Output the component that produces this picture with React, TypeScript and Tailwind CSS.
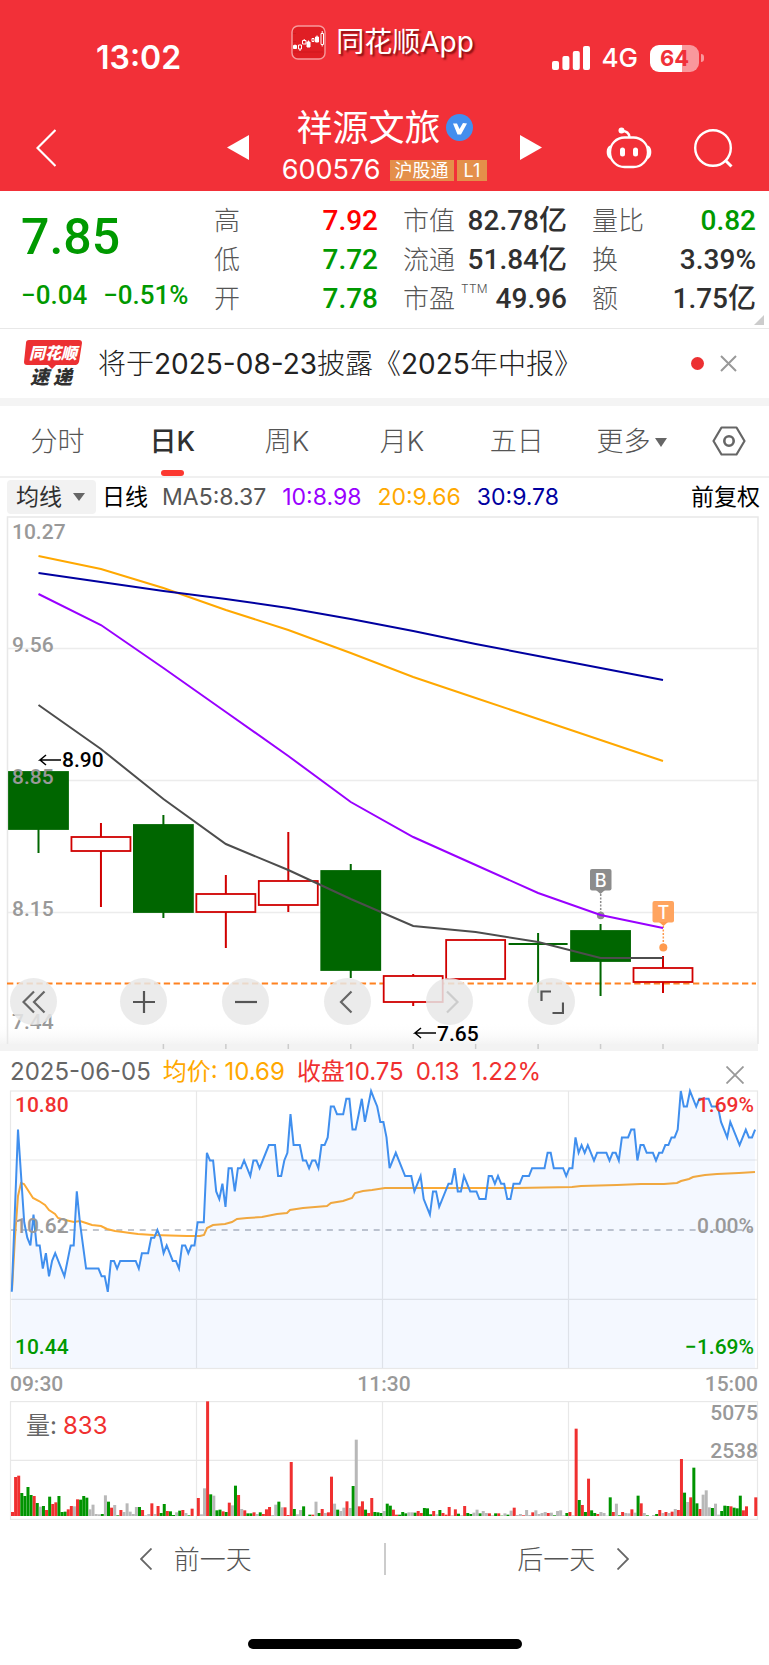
import { useState } from 'react'

interface Candle {
  open: number
  close: number
  high: number
  low: number
  up: boolean
}

interface Metric {
  label: string
  value: string
  tone?: string
  note?: string
}

const metrics: Metric[][] = [
  [
    { label: '高', value: '7.92', tone: 'text-[#ff0000]' },
    { label: '低', value: '7.72', tone: 'text-[#009900]' },
    { label: '开', value: '7.78', tone: 'text-[#009900]' },
  ],
  [
    { label: '市值', value: '82.78亿' },
    { label: '流通', value: '51.84亿' },
    { label: '市盈', value: '49.96', note: 'TTM' },
  ],
  [
    { label: '量比', value: '0.82', tone: 'text-[#009900]' },
    { label: '换', value: '3.39%' },
    { label: '额', value: '1.75亿' },
  ],
]

const tabs = ['分时', '日K', '周K', '月K', '五日', '更多']

// Chart units: open/close/high/low are y positions inside the plot
const candles: Candle[] = [
  { open: 256, close: 313, high: 256, low: 337, up: false },
  { open: 335, close: 321, high: 307, low: 391, up: true },
  { open: 309, close: 396, high: 299, low: 402, up: false },
  { open: 396, close: 378, high: 359, low: 432, up: true },
  { open: 389, close: 365, high: 316, low: 396, up: true },
  { open: 355, close: 454, high: 348, low: 462, up: false },
  { open: 486, close: 460, high: 458, low: 490, up: true },
  { open: 463, close: 424, high: 423, low: 463, up: true },
  { open: 427, close: 429, high: 417, low: 477, up: false },
  { open: 415, close: 445, high: 408, low: 480, up: false },
  { open: 466, close: 452, high: 440, low: 477, up: true },
]

const averages = [
  { color: '#ffa800', ys: [40, 53, 72, 94, 114, 137, 161, 182, 203, 224, 245] },
  { color: '#0000a0', ys: [57, 66, 75, 83, 92, 103, 115, 128, 140, 152, 164] },
  { color: '#9900ff', ys: [78, 109, 152, 196, 240, 286, 321, 349, 377, 399, 412] },
  { color: '#4d4d4d', ys: [189, 233, 283, 328, 354, 383, 410, 416, 426, 442, 442] },
]

const candleX = (i: number) => 38.5 + i * 62.45

// minute:cents away from the previous close of 10.62
const priceData =
  '0:-8 2:13 4:1 5:-1 6:-2 7:2 8:-2 9:-2 10:-5 11:-3 12:-6 13:-4 14:-3 17:-6 19:-2 20:-2 21:5 22:1 24:-5 28:-5 ' +
  '29:-6 30:-6 31:-8 32:-4 33:-4 34:-5 35:-4 40:-4 41:-5 42:-3 44:-3 45:-1 46:-1 47:0 48:-1 49:-3 50:-2 52:-4 ' +
  '53:-4 54:-5 55:-2 56:-2 57:-3 58:-2 59:-2 60:1 62:1 63:10 64:9 65:9 66:5 67:4 68:6 69:3 70:8 71:8 72:5 73:8 ' +
  '74:8 75:9 77:7 78:9 79:9 80:8 83:11 85:11 86:7 87:7 88:9 89:10 90:15 91:11 93:11 94:9 95:9 96:8 97:9 98:9 ' +
  '99:8 100:11 101:11 102:12 103:16 104:16 105:15 107:15 108:17 109:17 110:13 111:13 112:15 113:17 114:14 ' +
  '116:18 117:17 118:16 119:14 120:14 121:12 122:8 124:10 127:7 129:7 130:5 132:7 133:4 135:2 136:5 137:5 ' +
  '138:3 141:6 142:6 143:8 144:5 145:5 146:7 148:5 150:5 151:4 153:4 154:7 155:7 156:6 157:7 158:6 159:6 ' +
  '160:4 161:4 162:6 164:6 165:7 167:7 168:8 172:8 173:10 174:10 175:8 178:8 179:7 180:8 181:8 182:12 183:10 ' +
  '184:11 185:10 186:11 188:9 189:10 192:10 193:9 194:10 195:10 196:9 197:12 199:12 200:13 201:13 202:9 ' +
  '203:11 204:11 205:10 207:10 208:9 209:10 210:10 211:11 212:11 213:12 214:12 215:13 216:18 217:16 218:16 ' +
  '219:18 221:16 222:17 225:17 226:16 228:16 229:14 230:13 231:12 232:14 235:11 237:13 238:12 239:12 240:13'

const pricePoints = priceData
  .split(' ')
  .map((item) => {
    const [minute, cents] = item.split(':').map(Number)
    return `${(11.8 + minute * 3.097).toFixed(1)},${(140 - cents * 7.72).toFixed(1)}`
  })
  .join(' ')

const averagePoints =
  '12,200 15,147 18,106 21,93 24,94 33,108 39,111 45,115 49,120 55,124 58,128 65,130 74,132 80,131 86,133 92,135 ' +
  '101,136 107,139 115,141 123,142 130,143 138,144 153,145 187,146 200,146 204,145 207,138 213,135 225,134 ' +
  '232,132 237,129 247,128 262,127 277,124 287,123 290,120 303,118 315,117 327,116 331,113 343,111 352,108 ' +
  '355,103 363,101 372,100 385,98 404,98 517,98 572,97 581,96 617,95 641,94 664,94 677,93 681,91 689,89 693,87 ' +
  '705,85 717,84 739,83 755,82'

// One bar per minute: r = up, g = down, w = flat, then its height (344 = 5075 lots)
const volumeData =
  'r12 r117 r121 g69 g60 g87 g63 r60 g39 w28 g30 r18 g58 r36 r41 g60 g12 g13 r20 r30 w29 r50 g49 g60 g55 w20 w34 ' +
  'w6 w5 g6 w62 g43 r25 w33 g2 r18 w12 w38 w13 w6 w27 g27 r18 w2 w6 r38 w6 r30 g9 g36 r15 g14 g3 w11 g16 r18 w9 ' +
  'g2 r22 w0 r54 w5 w83 r344 g65 w61 g17 g19 r14 g12 r40 w32 g91 r63 w21 r17 g8 g8 r11 w6 g11 r6 r20 r27 w3 w34 ' +
  'g43 w26 r26 r3 r162 g21 w5 w18 g29 w0 g4 r4 w43 g9 r21 w9 r11 r118 w37 g19 w15 w25 r44 w24 g90 w229 r29 r44 ' +
  'g19 r9 r54 g12 g11 g9 w15 g37 g31 r19 r4 g4 g12 g8 w11 w11 g10 r15 r9 g24 g23 g5 r15 w5 g18 r9 r4 r27 w2 r20 ' +
  'g7 w2 r30 g9 g6 w10 w19 g8 w15 w9 r8 w2 g8 r8 g1 w8 g4 w16 r25 w3 w6 r2 w18 w3 r11 w17 w6 w9 w12 r9 w10 g2 ' +
  'w15 w17 w2 g9 r12 w2 r262 g48 r33 g12 r112 g17 g9 r6 w12 w9 w1 g56 r12 w37 g2 r12 w9 w8 r20 w10 g61 r38 w9 ' +
  'g2 w0 w3 g6 r18 w9 r12 w9 r13 w21 r18 r171 g70 w42 r56 g145 g38 r21 w64 w77 w26 g24 w37 w4 g15 g31 g30 r29 ' +
  'g25 g23 g61 r17 r29 w0 w0 r56'

const volumes = volumeData.split(' ').map((item) => ({
  kind: item[0],
  height: Number(item.slice(1)) / 3,
}))

const volumeColors: Record<string, string> = { r: '#f03030', g: '#009400', w: '#b8b8b8' }

const digits = "font-['Roboto','Noto_Sans_CJK_SC',sans-serif] font-medium"

function StatusBar() {
  return (
    <div className="grid h-[84px] grid-cols-[1fr_auto_1fr] items-center">
      <div className="pt-8 pl-24 text-[32px] font-semibold">13:02</div>
      <div className="flex items-center gap-2.5 pr-1">
        <svg className="size-[35px]" viewBox="0 0 35 35" fill="none" stroke="#fff">
          <rect x="1" y="1" width="33" height="33" rx="6" fill="#e01e24" stroke="#f79a9c" strokeWidth="1.4" />
          <path d="M2 8.500h3M2 16.500h3M2 27h30" stroke="#c9181e" strokeWidth=".7" />
          <path d="M2.500 20.500h3v3h-3zM16 17h3v5h-3zM24.500 12h3v5h-3z" fill="#fff" />
          <path d="M7.500 20h3v4h-3zM9 24v2M11.500 15.500h3.500v3.500h-3.500zM13.200 14v1.500M21 13.500h2v3h-2zM30 8.500h2.500v11h-2.500zM31.200 6v2.500M31.200 19.500v2" />
          <path d="M17.500 15.500v1.500M26 10.500v1.500M4 19.500v1" />
        </svg>
        <span className="text-[28px] leading-none [text-shadow:2px_2px_2px_rgba(90,0,0,0.75)]">同花顺App</span>
      </div>
      <div className="flex items-center justify-end gap-3 pt-8 pr-[65px]">
        <svg className="h-6 w-[38px]" viewBox="0 0 38 24" fill="#fff">
          <rect x="0" y="15" width="7" height="9" rx="2" />
          <rect x="10.400" y="10" width="7" height="14" rx="2" />
          <rect x="20.800" y="5" width="7" height="19" rx="2" />
          <rect x="31" y="0" width="7" height="24" rx="2" />
        </svg>
        <span className="text-[26px] leading-none font-medium">4G</span>
        <div className="flex items-center gap-0.5">
          <div className="flex h-[27px] w-[49px] items-center justify-center rounded-[9px] bg-[linear-gradient(90deg,#fff_65%,#f9989c_65%)] text-[22px] leading-none font-bold text-[#f03038]">
            64
          </div>
          <div className="h-2 w-[3px] rounded-r-full bg-[#f9989c]" />
        </div>
      </div>
    </div>
  )
}

function TitleBar() {
  return (
    <div className="grid h-[107px] grid-cols-[1fr_auto_1fr] items-center pt-5">
      <div className="pl-8">
        <button aria-label="返回" className="block p-1">
          <svg className="h-[38px] w-5" viewBox="0 0 20 38" fill="none" stroke="#fff" strokeWidth="2.2">
            <path d="M19.500 1 1.500 19l18 18" />
          </svg>
        </button>
      </div>
      <div className="flex items-center gap-[33px]">
        <button aria-label="上一只">
          <svg className="block h-[25px] w-[22px]" viewBox="0 0 22 25" fill="#fff">
            <path d="M0 12.500 22 0v25z" />
          </svg>
        </button>
        <div className="flex flex-col items-center">
          <h1 className="flex h-[46px] items-center gap-[5px] text-[36px] font-normal">
            祥源文旅
            <svg className="size-[27px]" viewBox="0 0 27 27">
              <circle cx="13.500" cy="13.500" r="13.500" fill="#438eee" />
              <path d="M7 9.500h4l2.500 5.500 3.500-6 4 0.500-6 11h-3.500z" fill="#fff" />
            </svg>
          </h1>
          <div className="flex h-10 items-center gap-[3px]">
            <span className="mr-1.5 text-[27px]">600576</span>
            <span className="flex h-[21px] items-center bg-[#e48f4a] px-[5px] text-[18px]">沪股通</span>
            <span className="flex h-[21px] items-center bg-[#e48f4a] px-[7px] text-[18px]">L1</span>
          </div>
        </div>
        <button aria-label="下一只">
          <svg className="block h-[25px] w-[22px]" viewBox="0 0 22 25" fill="#fff">
            <path d="M0 0v25l22-12.500z" />
          </svg>
        </button>
      </div>
      <div className="flex items-center justify-end gap-[41px] pr-9">
        <button aria-label="智能助手">
          <svg className="block h-[42px] w-[46px]" viewBox="0 0 46 42" fill="none" stroke="#fff" strokeWidth="2.400">
            <rect x="4" y="10.500" width="38" height="29.500" rx="14.500" />
            <path d="M4.500 19.500C1 21 1 29 4.500 31M41.500 19.500C45 21 45 29 41.500 31" />
            <path d="M16 4c5 0 7 2 7.500 6" />
            <circle cx="15.500" cy="3.500" r="3" fill="#fff" stroke="none" />
            <rect x="14" y="20.500" width="5" height="9" rx="2.500" fill="#fff" stroke="none" />
            <rect x="27" y="20.500" width="5" height="9" rx="2.500" fill="#fff" stroke="none" />
          </svg>
        </button>
        <button aria-label="搜索">
          <svg className="block size-[40px]" viewBox="0 0 40 40" fill="none" stroke="#fff" strokeWidth="2.400">
            <circle cx="20" cy="20" r="17.800" />
            <path d="m32 32 6.500 6.500" strokeWidth="3" />
          </svg>
        </button>
      </div>
    </div>
  )
}

function Quote() {
  return (
    <section className="relative grid h-[138px] grid-cols-[minmax(0,1fr)_164px_164px_164px] gap-x-[25px] border-b border-[#e8e8e8] pt-2.5 pr-[13px] pl-[21px]">
      <div className={`whitespace-nowrap text-[#009900] ${digits}`}>
        <div className="flex h-[72px] items-center text-[50px]">7.85</div>
        <div className="flex h-[45px] items-center gap-4 text-[26px]">
          <span>−0.04</span>
          <span>−0.51%</span>
        </div>
      </div>
      {metrics.map((column) => (
        <dl key={column[0].label}>
          {column.map((m) => (
            <div key={m.label} className="flex h-[39px] items-center justify-between whitespace-nowrap">
              <dt className="flex text-[26px] leading-[39px] font-light text-[#555]">
                {m.label}
                {m.note && <sup className="top-0 pt-1 pl-1.5 text-[12px] leading-none tracking-wide">{m.note}</sup>}
              </dt>
              <dd className={`text-[28px] leading-[39px] ${digits} ${m.tone ?? 'text-[#303030]'}`}>{m.value}</dd>
            </div>
          ))}
        </dl>
      ))}
      <svg className="absolute right-[5px] bottom-[3px] size-2.5" viewBox="0 0 10 10" fill="#ccc">
        <path d="M10 0v10H0z" />
      </svg>
    </section>
  )
}

function Notice() {
  return (
    <section className="flex h-[77px] items-center border-b-8 border-[#f4f4f4] pr-8 pl-6">
      <svg className="mr-3.5 h-14 w-[60px] overflow-visible" viewBox="0 -4 60 56">
        <path d="M5 0h50q3 0 3 3l-3 19q-1 3-3 3H32l-4 4-4-4H3q-3 0-3-3L2 3q0-3 3-3z" fill="#ec3032" />
        <g fontFamily="Noto Sans CJK SC, sans-serif" fontWeight="900" fontStyle="italic">
          <text x="5" y="19" fontSize="16" fill="#fff">同花顺</text>
          <text x="6" y="44" fontSize="19" fill="#303030">速</text>
          <text x="29" y="44" fontSize="19" fill="#303030">递</text>
        </g>
      </svg>
      <a href="#report" className="flex-1 text-[28px] font-light whitespace-nowrap text-[#222]">
        将于<span className="font-normal">2025-08-23</span>披露《<span className="font-normal">2025</span>年中报》
      </a>
      <span className="mr-4 size-[13px] rounded-full bg-[#ec3032]" />
      <button aria-label="关闭公告">
        <svg className="block size-[17px]" viewBox="0 0 17 17" stroke="#999" strokeWidth="2">
          <path d="m1 1 15 15M16 1 1 16" />
        </svg>
      </button>
    </section>
  )
}

function Tabs() {
  const [active, setActive] = useState('日K')

  return (
    <nav className="flex h-[72px] border-b-2 border-[#f0f0f0]">
      {tabs.map((tab) => (
        <button
          key={tab}
          onClick={() => setActive(tab)}
          className={`flex flex-1 flex-col items-center text-[27px] ${
            tab === active ? 'font-medium text-[#303030]' : 'font-light text-[#555]'
          }`}
        >
          <span className="flex h-16 items-center gap-1 pt-2">
            {tab}
            {tab === '更多' && (
              <svg className="h-[9px] w-3" viewBox="0 0 12 9" fill="#666">
                <path d="M0 0h12L6 9z" />
              </svg>
            )}
          </span>
          {tab === active && <span className="h-1.5 w-[23px] rounded-full bg-[#fc3830]" />}
        </button>
      ))}
      <button aria-label="设置" className="flex w-20 items-center justify-center">
        <svg className="h-[30px] w-[34px]" viewBox="0 0 34 30" fill="none" stroke="#666" strokeWidth="2.200">
          <path d="M9.500 1.500h15L32.500 15l-8 13.500h-15L1.500 15z" strokeLinejoin="round" />
          <circle cx="17" cy="15" r="4.700" strokeWidth="2.600" />
        </svg>
      </button>
    </nav>
  )
}

function Legend() {
  return (
    <div className="flex h-[38px] items-center pr-[9px] pl-[7px] text-[23px] whitespace-nowrap">
      <label className="relative mr-1.5 flex items-center">
        <select aria-label="指标" className="h-[34px] w-[89px] appearance-none rounded-sm bg-[#f2f2f2] pl-[9px] text-[#303030]">
          <option>均线</option>
          <option>布林</option>
        </select>
        <svg className="pointer-events-none absolute right-[11px] h-2 w-3" viewBox="0 0 12 8" fill="#666">
          <path d="M0 0h12L6 8z" />
        </svg>
      </label>
      <span className="mr-3.5 text-black">日线</span>
      <div className="flex flex-1 gap-4">
        <span className="text-[#555]">MA5:8.37</span>
        <span className="text-[#9900ff]">10:8.98</span>
        <span className="text-[#ffa800]">20:9.66</span>
        <span className="text-[#0000a0]">30:9.78</span>
      </div>
      <span className="text-black">前复权</span>
    </div>
  )
}

function DailyChart() {
  const round = 'flex size-[47px] items-center justify-center rounded-full bg-[#e8e8e8]/85'

  return (
    <section className="relative">
      <svg className="block w-full" viewBox="0 0 769 535" fontFamily="Roboto, sans-serif" fontWeight="500" fontSize="21">
        <defs>
          <linearGradient id="fade" x1="0" y1="0" x2="0" y2="1">
            <stop offset="0" stopColor="#fff" stopOpacity="0" />
            <stop offset="1" stopColor="#f4f4f4" />
          </linearGradient>
        </defs>
        <rect y="506" width="758" height="22" fill="url(#fade)" />
        <rect y="528" width="758" height="7" fill="#f3f3f3" />
        <g stroke="#e8e8e8" strokeWidth="1.500" fill="none">
          <path d="M7.500 528V1h750.500v527" />
          <path d="M8 132.500h750M8 264.500h750M8 396.500h750" stroke="#ececec" />
        </g>
        {candles.map((_, i) => (
          i > 1 && <path key={i} d={`M${candleX(i)} 528v5`} stroke="#ccc" strokeWidth="1.500" />
        ))}
        <path d="M7 467.500h749" stroke="#ff8220" strokeWidth="1.800" strokeDasharray="6.300 3.500" />

        {candles.map((c, i) => {
          const x = candleX(i)
          const color = c.up ? '#d00000' : '#006600'
          const top = Math.min(c.open, c.close)
          const bottom = Math.max(c.open, c.close)
          return (
            <g key={i} stroke={color} strokeWidth="2">
              <path d={`M${x} ${c.high}V${top}M${x} ${bottom}V${c.low}`} />
              <rect
                x={x - 29.500}
                y={top}
                width="59"
                height={bottom - top}
                fill={c.up ? '#fff' : color}
                strokeWidth={bottom - top < 3 ? 0 : 1.800}
              />
            </g>
          )
        })}

        <g stroke="#8c8c8c" fill="#8c8c8c">
          <rect x="590" y="353" width="21.500" height="21.500" rx="2" stroke="none" />
          <path d="M596 374h9l-4.500 4z" stroke="none" />
          <path d="M600.700 378v18" strokeWidth="1.500" strokeDasharray="2 1.500" />
          <circle cx="600.700" cy="399.500" r="3.800" stroke="none" />
        </g>
        <g stroke="#ff9a4d" fill="#ff9a4d">
          <rect x="652.500" y="385" width="21.500" height="21.500" rx="2" stroke="none" fill="#ffa45f" />
          <path d="M659 406h9l-4.500 4z" stroke="none" />
          <path d="M663.300 410v18" strokeWidth="1.500" strokeDasharray="2 1.500" />
          <circle cx="663.300" cy="431.500" r="4" stroke="none" />
        </g>
        <g fill="#fff" fontFamily="Inter, sans-serif" fontSize="18" textAnchor="middle">
          <text x="600.700" y="370.500">B</text>
          <text x="663.300" y="402.500">T</text>
        </g>

        {averages.map((line) => (
          <polyline
            key={line.color}
            points={line.ys.map((y, i) => `${candleX(i)},${y}`).join(' ')}
            fill="none"
            stroke={line.color}
            strokeWidth="2"
          />
        ))}

        <g fill="#999">
          <text x="12" y="23">10.27</text>
          <text x="12" y="136">9.56</text>
          <text x="12" y="268">8.85</text>
          <text x="12" y="400">8.15</text>
          <text x="12" y="513">7.44</text>
        </g>
        <g fill="#000">
          <text x="62" y="251">8.90</text>
          <text x="437" y="525">7.65</text>
        </g>
        <path d="M61 244H40l6-5M40 244l6 5M436 517h-21l6-5M415 517l6 5" fill="none" stroke="#000" strokeWidth="1.500" />
      </svg>

      <div className="absolute bottom-[26px] left-2.5 flex gap-[55px]">
        <button aria-label="最早" className={`mr-2 ${round}`}>
          <svg className="size-6" viewBox="0 0 24 24" fill="none" stroke="#666" strokeWidth="2.200">
            <path d="M12 1.500 1.500 12 12 22.500M22.500 1.500 12 12l10.500 10.500" />
          </svg>
        </button>
        <button aria-label="放大" className={round}>
          <svg className="size-6" viewBox="0 0 24 24" stroke="#555" strokeWidth="2.200">
            <path d="M1 12h22M12 1v22" />
          </svg>
        </button>
        <button aria-label="缩小" className={round}>
          <svg className="size-6" viewBox="0 0 24 24" stroke="#555" strokeWidth="2.200">
            <path d="M1 12h22" />
          </svg>
        </button>
        <button aria-label="向左" className={round}>
          <svg className="size-6" viewBox="0 0 24 24" fill="none" stroke="#666" strokeWidth="2.200">
            <path d="M15.500 1.500 5 12l10.500 10.500" />
          </svg>
        </button>
        <button aria-label="向右" className={round}>
          <svg className="size-6" viewBox="0 0 24 24" fill="none" stroke="#ccc" strokeWidth="2.200">
            <path d="M9 1.500 19.500 12 9 22.500" />
          </svg>
        </button>
        <button aria-label="全屏" className={round}>
          <svg className="size-6" viewBox="0 0 24 24" fill="none" stroke="#555" strokeWidth="2.200">
            <path d="M1.500 11V1.500H11M23 12.500V23H12.500" />
          </svg>
        </button>
      </div>
    </section>
  )
}

function DayDetail() {
  return (
    <section>
      <div className="flex h-[39px] items-center pr-[25px] pl-2.5 text-[24px] whitespace-nowrap">
        <div className="flex flex-1 gap-3 pt-0.5">
          <span className="text-[#666]">2025-06-05</span>
          <span className="text-[#ffa800]">均价: 10.69</span>
          <span className="text-[#f03030]">收盘10.75</span>
          <span className="text-[#f03030]">0.13</span>
          <span className="text-[#f03030]">1.22%</span>
        </div>
        <button aria-label="关闭分时" className="pt-2">
          <svg className="block size-[18px]" viewBox="0 0 18 18" stroke="#999" strokeWidth="1.800">
            <path d="m.5.5 17 17M17.500.500l-17 17" />
          </svg>
        </button>
      </div>

      <svg
        className="block w-full overflow-visible"
        viewBox="0 0 769 279"
        fontFamily="Roboto, sans-serif"
        fontWeight="500"
        fontSize="21"
      >
        <g stroke="#e8e8e8" strokeWidth="1.200" fill="none">
          <rect x="10.500" y="1" width="747" height="277.500" />
          <path d="M10 70h747M10 209.300h747M196.500 1v277M382.500 1v277M568.500 1v277" />
        </g>
        <path d="M11 140h742" stroke="#b0b4bc" strokeWidth="1.500" strokeDasharray="6 5.700" />
        <polyline points={averagePoints} fill="none" stroke="#fbaa35" strokeWidth="2" />
        <polygon points={`12,278 ${pricePoints} 755,278`} fill="#3c8cff" fillOpacity="0.060" />
        <polyline points={pricePoints} fill="none" stroke="#408fee" strokeWidth="2" />
        <g fill="#f03030">
          <text x="15" y="22">10.80</text>
          <text x="754" y="22" textAnchor="end">1.69%</text>
        </g>
        <g fill="#999">
          <text x="15" y="143">10.62</text>
          <text x="754" y="143" textAnchor="end">0.00%</text>
        </g>
        <g fill="#009900">
          <text x="15" y="264">10.44</text>
          <text x="754" y="264" textAnchor="end">−1.69%</text>
        </g>
      </svg>

      <div className={`flex h-8 items-center justify-between pr-[11px] pl-2.5 text-[21px] text-[#999] ${digits}`}>
        <span>09:30</span>
        <span>11:30</span>
        <span>15:00</span>
      </div>

      <svg className="block w-full" viewBox="0 0 769 119">
        <g stroke="#e8e8e8" strokeWidth="1.200" fill="none">
          <rect x="10.500" y=".6" width="747" height="117.800" />
          <path d="M10 59.300h747M196.500 1v117M382.500 1v117M568.500 1v117" />
        </g>
        {volumes.map((v, i) => (
          <rect key={i} x={11 + i * 3.097} y={115 - v.height} width="3" height={v.height} fill={volumeColors[v.kind]} />
        ))}
        <g fontFamily="Inter, Noto Sans CJK SC, sans-serif" fontSize="24">
          <text x="26" y="33" fill="#666">量:</text>
          <text x="63" y="33" fill="#f03030">833</text>
        </g>
        <g fontFamily="Roboto, sans-serif" fontWeight="500" fontSize="21" fill="#999" textAnchor="end">
          <text x="758" y="19">5075</text>
          <text x="758" y="57">2538</text>
        </g>
      </svg>
    </section>
  )
}

function DaySwitch() {
  return (
    <div className="flex h-[78px] items-center text-[26px] font-light text-[#555]">
      <button className="flex flex-1 items-center justify-center gap-[22px] pl-2">
        <svg className="h-[22px] w-3" viewBox="0 0 12 22" fill="none" stroke="#666" strokeWidth="1.800">
          <path d="M11.500.500 1 11l10.500 10.500" />
        </svg>
        前一天
      </button>
      <span className="h-8 w-0.5 bg-[#ccc]" />
      <button className="flex flex-1 items-center justify-center gap-[22px] pr-2">
        后一天
        <svg className="h-[22px] w-3" viewBox="0 0 12 22" fill="none" stroke="#666" strokeWidth="1.800">
          <path d="M.5.500 11 11 .5 21.500" />
        </svg>
      </button>
    </div>
  )
}

export default function App() {
  return (
    <div className="bg-white font-['Inter','Noto_Sans_CJK_SC',sans-serif]">
      <header className="bg-[#f23038] text-white">
        <StatusBar />
        <TitleBar />
      </header>
      <main>
        <Quote />
        <Notice />
        <Tabs />
        <Legend />
        <DailyChart />
        <DayDetail />
        <DaySwitch />
      </main>
      <div className="flex justify-center pt-[41px] pb-4">
        <div className="h-2.5 w-[274px] rounded-full bg-black" />
      </div>
    </div>
  )
}
